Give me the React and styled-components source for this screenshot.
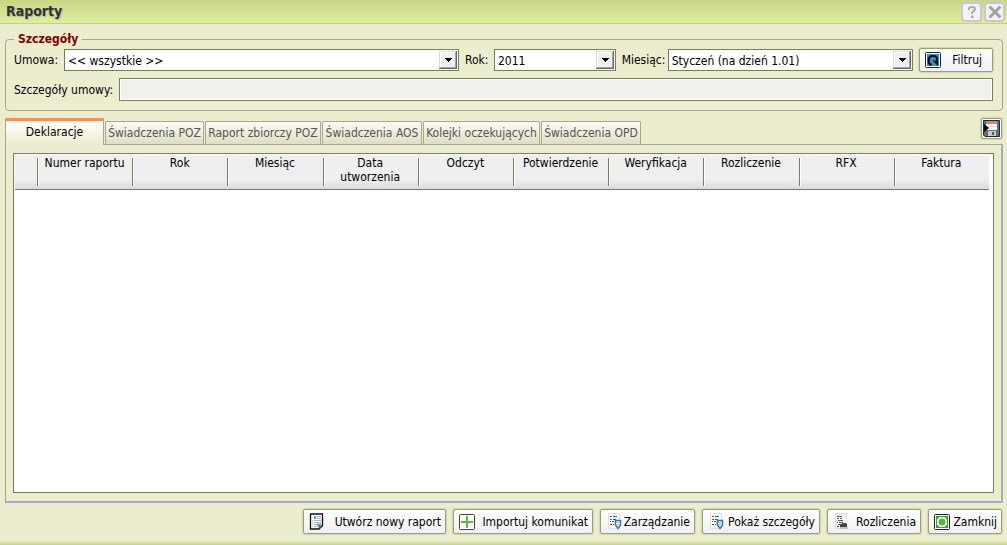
import React, { useState } from "react";
import styled, { createGlobalStyle } from "styled-components";

const GlobalStyle = createGlobalStyle`
  * {
    box-sizing: border-box;
  }
  body {
    margin: 0;
    background: #ececce;
    color: #000;
    font-family: "DejaVu Sans Condensed", "Noto Sans", Tahoma, sans-serif;
    font-size: 12px;
    line-height: 14px;
  }
  button, select, input {
    font: inherit;
    color: inherit;
    margin: 0;
  }
`;

const Window = styled.div`
  display: flex;
  flex-direction: column;
  min-height: 100vh;
`;
const TitleBar = styled.header`
  display: flex;
  align-items: center;
  height: 24px;
  padding: 0 2px 0 6px;
  gap: 2px;
  background: linear-gradient(#c8d787, #dfee9f);
  border-bottom: 1px solid #c3d086;
  h1 {
    flex: 1;
    margin: 0;
    padding-bottom: 2px;
    font-size: 14px;
    line-height: 20px;
    color: #333;
    text-shadow: 1px 1px 1px #a9b09a;
  }
`;
const TitleButton = styled.button`
  display: flex;
  align-items: center;
  justify-content: center;
  width: 21px;
  height: 20px;
  padding: 0;
  background: #f3f3f3;
  border: 2px solid #c9c9cd;
  border-radius: 4px;
`;
const Content = styled.main`
  display: flex;
  flex: 1;
  flex-direction: column;
  padding: 8px 4px 0 5px;
`;
const Filters = styled.fieldset`
  min-width: 0;
  margin: 0;
  padding: 2px 9px 9px 8px;
  border: 1px solid #a9a793;
  border-radius: 4px;
  legend {
    padding: 0 4px;
    color: #800000;
    font-weight: bold;
  }
`;
const FilterRow = styled.div`
  display: flex;
  align-items: center;
  gap: 5px;
  & + & {
    margin-top: 6px;
  }
`;
const Label = styled.label`
  flex: none;
  width: ${(props) => props.$width}px;
  white-space: nowrap;
`;
const SelectBox = styled.div`
  position: relative;
  flex: ${(props) => props.$grow} 1 0;
  height: 22px;
  margin-right: 1px;
  svg {
    position: absolute;
    top: 2px;
    right: 2px;
    pointer-events: none;
  }
`;
const Select = styled.select`
  appearance: none;
  width: 100%;
  height: 22px;
  padding: 2px 20px 0 3px;
  background: #fff;
  border: 1px solid #74805a;
  border-radius: 0;
`;
const Details = styled.input`
  flex: 1;
  min-width: 0;
  height: 23px;
  background: #f1f1ec;
  border: 1px solid #74805a;
  box-shadow: inset 0 0 0 1px #fff;
`;
const Button = styled.button`
  display: flex;
  flex: none;
  align-items: center;
  width: ${(props) => props.$width}px;
  height: ${(props) => (props.$compact ? 24 : 25)}px;
  padding: 0 ${(props) => (props.$compact ? 10 : 4)}px 0 5px;
  background: linear-gradient(#fff, #f0f0f0);
  border: 1px solid #94a46c;
  border-radius: 2px;
  box-shadow: 0 0 1px 1px #d0d9ae;
  white-space: nowrap;
  svg {
    flex: none;
  }
  span {
    flex: 1;
    text-align: right;
  }
`;
const TabBar = styled.div`
  display: flex;
  align-items: flex-start;
  justify-content: space-between;
  height: 26px;
  margin-top: 7px;
`;
const Tabs = styled.div`
  display: flex;
  align-items: flex-end;
  height: 27px;
  gap: 1px;
`;
const Tab = styled.button`
  position: relative;
  z-index: 1;
  width: ${(props) => props.$width}px;
  height: ${(props) => (props.$active ? 27 : 24)}px;
  padding: 0 0 ${(props) => (props.$active ? 3 : 0)}px;
  color: ${(props) => (props.$active ? "#000" : "#555")};
  background: ${(props) =>
    props.$active
      ? "linear-gradient(#fff, #ececce)"
      : "linear-gradient(#fbfbf5, #dedec4)"};
  border: 1px solid #a9a793;
  border-top: ${(props) => (props.$active ? "3px solid #f98f55" : "")};
  border-bottom: ${(props) => (props.$active ? 0 : "")};
  border-radius: 1px 1px 0 0;
  white-space: nowrap;
`;
const SaveButton = styled.button`
  display: flex;
  align-items: center;
  justify-content: center;
  width: 21px;
  height: 21px;
  margin-right: 1px;
  padding: 0;
  background: #fff;
  border: 1px solid #94a46c;
  border-radius: 2px;
  box-shadow: 0 0 1px 1px #d0d9ae;
`;
const Panel = styled.section`
  display: flex;
  flex: 1;
  padding: 8px 7px;
  border: 1px solid #a9a793;
  border-right: 2px solid #a5adc4;
  border-bottom: 2px solid #a5adc4;
`;
const GridBox = styled.div`
  flex: 1;
  padding: 1px 4px 1px 1px;
  background: #fff;
  border: 1px solid #74805a;
`;
const Grid = styled.table`
  width: 100%;
  table-layout: fixed;
  border-collapse: collapse;
  th {
    height: 34px;
    padding: 1px 0 3px;
    vertical-align: top;
    font-weight: normal;
    background: linear-gradient(#efefef 70%, #dcdcdc);
    border-bottom: 1px solid #74805a;
  }
  th:first-child {
    width: 22px;
  }
`;
const HeadCell = styled.div`
  height: 30px;
  padding: 0 6px;
  background:
    linear-gradient(#74805a, #74805a) 0 100% / 1px 28px no-repeat,
    linear-gradient(#fff, #fff) 1px 100% / 1px 28px no-repeat;
`;
const Footer = styled.footer`
  display: flex;
  justify-content: flex-end;
  gap: 7px;
  padding: 6px 1px 7px 0;
`;
const BottomEdge = styled.div`
  height: 4px;
  background: linear-gradient(#e2e8bc, #c3d488);
`;

const Arrow = () => (
  <svg width="18" height="18" viewBox="0 0 18 18" shapeRendering="crispEdges">
    <path d="M0 0h18v18H0z" fill="#efefef" />
    <path d="M0 18V0h18" fill="none" stroke="#d9d9d9" strokeWidth="2" />
    <path d="M1 17V1h16" fill="none" stroke="#fff" />
    <path d="M1 16.500h15.500V1" fill="none" stroke="#a5a5a5" />
    <path d="M0 17.500h17.500V0" fill="none" stroke="#666" />
    <path d="M6 7h7v1h-1v1h-1v1h-1v1H9v-1H8V9H7V8H6z" />
  </svg>
);

const RefreshIcon = () => (
  <svg width="16" height="16" viewBox="0 0 16 16">
    <rect x=".5" y=".5" width="15" height="15" rx="1" fill="#fff" stroke="#222" />
    <path d="M2 2h12v12H2z" fill="#2299d2" />
    <path d="M7 12.500H5L3.700 10.500v-4L6 4h4l2 2v3" fill="none" stroke="#000" strokeWidth="2" />
    <path d="M7.500 8.500H13V14z" />
  </svg>
);

const SaveIcon = () => (
  <svg width="17" height="17" viewBox="0 0 17 17">
    <path d="M.5.5h16v16H2L.5 15z" fill="#5f6d78" stroke="#202830" />
    <path d="M3 1h11v9H3z" fill="#f4f4f4" />
    <path d="M3 1h11v3H3z" fill="#dc8078" />
    <path d="M4 6.500h10" stroke="#ddd" />
    <path d="M1 4l5 4-5 4z" fill="#000" />
    <path d="M5 11h8v5H5z" fill="#c8c8c8" />
    <path d="M9 12h2v3H9z" fill="#555" />
  </svg>
);

const ReportIcon = () => (
  <svg width="16" height="17" viewBox="0 0 16 17">
    <path d="M1.500 1h12v11.500L10 16H1.500z" fill="#fff" stroke="#111" strokeWidth="1.300" />
    <path d="M5 3h2v3H5z" fill="#7899d0" />
    <path d="M8 3.500h4M8 5.500h4M3 7.500h1M5 7.500h7M3 9.500h1M5 9.500h7M3 11.500h1M5 11.500h3M5 13.500h3" stroke="#b5b5b5" />
    <path d="M8 10.500h4v1.500l-1.500 1H8z" fill="#4bb1d5" />
    <path d="M10 15.500V13h3.500z" fill="#ccc" stroke="#111" strokeWidth=".7" />
  </svg>
);

const PlusIcon = () => (
  <svg width="16" height="16" viewBox="0 0 16 16">
    <rect x=".5" y=".5" width="15" height="15" rx="1" fill="#fff" stroke="#444" />
    <path d="M8 2v12M2 8h12" stroke="#55be3b" strokeWidth="2" />
  </svg>
);

const ShieldListIcon = () => (
  <svg width="16" height="17" viewBox="0 0 16 17">
    <path d="M2.500.5h11v15h-11z" fill="#fafafa" stroke="#e0e0e0" />
    <path d="M4 3.500h2M7 3.500h4M4 6.500h2M7 6.500h3M4 8.500h1M6 8.500h2M4 11.500h2M7 11.500h1" stroke="#555" />
    <path d="M9.500 7.500h5v4.500L12 15.500 9.500 12z" fill="#fff" stroke="#167bea" strokeWidth="1.500" />
    <path d="M10.500 9.500h3M10.500 11.500h3" stroke="#e0b060" />
  </svg>
);

const BillIcon = () => (
  <svg width="16" height="17" viewBox="0 0 16 17">
    <path d="M2.500.5h11v15h-11z" fill="#f3f3f3" stroke="#ddd" />
    <path d="M4 3.500h5M4 5.500h2M7 5.500h2M5 7.500h5M4 9.500h1M6 9.500h4M5 11.500h3M4 13.500h2" stroke="#555" />
    <path d="M8 11l2-1h3l1 1v3H7v-2z" fill="#444" />
    <path d="M7 14h8v2H7z" fill="#c5c3a5" />
  </svg>
);

const CloseIcon = () => (
  <svg width="16" height="16" viewBox="0 0 16 16">
    <rect x=".5" y=".5" width="15" height="15" rx="1" fill="#fff" stroke="#222" />
    <path d="M2 2h12v12H2z" fill="#32a536" />
    <path d="M5.500 3h5L13 5.500v5L10.500 13h-5L3 10.500v-5z" fill="#fff" />
    <circle cx="8" cy="8" r="3.500" fill="#4ebf26" />
  </svg>
);

const tabs = [
  { name: "Deklaracje", width: 99 },
  { name: "Świadczenia POZ", width: 99 },
  { name: "Raport zbiorczy POZ", width: 116 },
  { name: "Świadczenia AOS", width: 100 },
  { name: "Kolejki oczekujących", width: 117 },
  { name: "Świadczenia OPD", width: 100 },
];

const columns = [
  "Numer raportu",
  "Rok",
  "Miesiąc",
  "Data utworzenia",
  "Odczyt",
  "Potwierdzenie",
  "Weryfikacja",
  "Rozliczenie",
  "RFX",
  "Faktura",
];

const actions = [
  { name: "Utwórz nowy raport", width: 143, icon: <ReportIcon /> },
  { name: "Importuj komunikat", width: 140, icon: <PlusIcon /> },
  { name: "Zarządzanie", width: 95, icon: <ShieldListIcon /> },
  { name: "Pokaż szczegóły", width: 118, icon: <ShieldListIcon /> },
  { name: "Rozliczenia", width: 94, icon: <BillIcon /> },
  { name: "Zamknij", width: 74, icon: <CloseIcon /> },
];

export default function App() {
  const [activeTab, setActiveTab] = useState("Deklaracje");

  return (
    <Window>
      <GlobalStyle />
      <TitleBar>
        <h1>Raporty</h1>
        <TitleButton aria-label="Pomoc">
          <svg width="12" height="14" viewBox="0 0 12 14">
            <path d="M3 5V3.500Q3 2 6 2t3 2q0 1.500-2 2.500Q6 7 6 9" fill="none" stroke="#aaa" strokeWidth="2" />
            <path d="M5 10.500h2.500V13H5z" fill="#aaa" />
          </svg>
        </TitleButton>
        <TitleButton aria-label="Zamknij okno">
          <svg width="14" height="14" viewBox="0 0 14 14">
            <path d="M1.500 1.500l11 11M12.500 1.500l-11 11" stroke="#a2a2a2" strokeWidth="3" />
          </svg>
        </TitleButton>
      </TitleBar>
      <Content>
        <Filters>
          <legend>Szczegóły</legend>
          <FilterRow>
            <Label htmlFor="contract" $width={45}>Umowa:</Label>
            <SelectBox $grow={396}>
              <Select id="contract">
                <option>&lt;&lt; wszystkie &gt;&gt;</option>
              </Select>
              <Arrow />
            </SelectBox>
            <Label htmlFor="year" $width={24}>Rok:</Label>
            <SelectBox $grow={122}>
              <Select id="year">
                <option>2011</option>
              </Select>
              <Arrow />
            </SelectBox>
            <Label htmlFor="month" $width={41}>Miesiąc:</Label>
            <SelectBox $grow={246}>
              <Select id="month">
                <option>Styczeń (na dzień 1.01)</option>
              </Select>
              <Arrow />
            </SelectBox>
            <Button $width={74} $compact>
              <RefreshIcon />
              <span>Filtruj</span>
            </Button>
          </FilterRow>
          <FilterRow>
            <Label htmlFor="details" $width={100}>Szczegóły umowy:</Label>
            <Details id="details" type="text" readOnly />
          </FilterRow>
        </Filters>
        <TabBar>
          <Tabs role="tablist">
            {tabs.map((tab) => (
              <Tab
                key={tab.name}
                role="tab"
                aria-selected={tab.name === activeTab}
                $active={tab.name === activeTab}
                $width={tab.width}
                onClick={() => setActiveTab(tab.name)}
              >
                {tab.name}
              </Tab>
            ))}
          </Tabs>
          <SaveButton aria-label="Zapisz">
            <SaveIcon />
          </SaveButton>
        </TabBar>
        <Panel>
          <GridBox>
            <Grid>
              <thead>
                <tr>
                  <th />
                  {columns.map((column) => (
                    <th key={column} scope="col">
                      <HeadCell>{column}</HeadCell>
                    </th>
                  ))}
                </tr>
              </thead>
            </Grid>
          </GridBox>
        </Panel>
        <Footer>
          {actions.map((action) => (
            <Button key={action.name} $width={action.width}>
              {action.icon}
              <span>{action.name}</span>
            </Button>
          ))}
        </Footer>
      </Content>
      <BottomEdge />
    </Window>
  );
}
